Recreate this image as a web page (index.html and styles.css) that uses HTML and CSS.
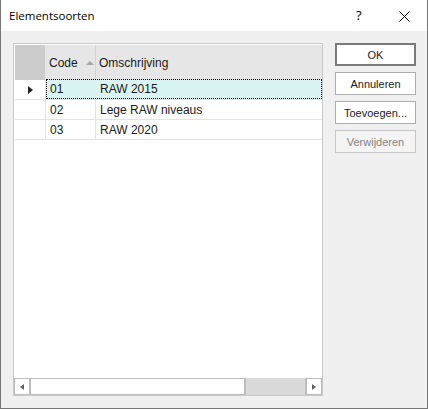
FILE: index.html
```html
<!DOCTYPE html>
<html>
<head>
<meta charset="utf-8">
<link rel="stylesheet" href="styles.css">
</head>
<body>
<div class="window">
  <div class="titlebar">
    <span class="title">Elementsoorten</span>
    <span class="help">?</span>
    <span class="close">
      <svg width="11" height="11" viewBox="0 0 11 11"><path d="M0.5 0.5 L10.5 10.5 M10.5 0.5 L0.5 10.5" stroke="#000" stroke-width="1" fill="none"/></svg>
    </span>
  </div>
  <div class="content">
    <div class="grid">
      <div class="table">
        <div class="row head">
          <div class="rh corner"></div>
          <div class="cell code hcell">Code<span class="sort"></span></div>
          <div class="cell desc hcell">Omschrijving</div>
        </div>
        <div class="row data current">
          <div class="rh"><span class="pointer"></span></div>
          <div class="focus">
            <div class="cell code">01</div>
            <div class="cell desc">RAW 2015</div>
          </div>
        </div>
        <div class="row data">
          <div class="rh"></div>
          <div class="cell code">02</div>
          <div class="cell desc">Lege RAW niveaus</div>
        </div>
        <div class="row data">
          <div class="rh"></div>
          <div class="cell code">03</div>
          <div class="cell desc">RAW 2020</div>
        </div>
      </div>
      <div class="hscroll">
        <div class="sbtn"><span class="arr-left"></span></div>
        <div class="thumb"></div>
        <div class="track"></div>
        <div class="sbtn"><span class="arr-right"></span></div>
      </div>
    </div>
    <div class="buttons">
      <div class="btn default">OK</div>
      <div class="btn">Annuleren</div>
      <div class="btn">Toevoegen...</div>
      <div class="btn disabled">Verwijderen</div>
    </div>
  </div>
</div>
</body>
</html>
```
FILE: styles.css
```css
* { box-sizing: border-box; }
html, body { margin: 0; padding: 0; }
body { width: 428px; height: 409px; overflow: hidden; background: #fff; }

.window {
  width: 428px;
  height: 409px;
  display: flex;
  flex-direction: column;
  border-left: 1px solid #767676;
  border-right: 1px solid #767676;
  border-bottom: 1px solid #767676;
  background: #f0f0f0;
}

.titlebar {
  height: 31px;
  flex: none;
  background: #fff;
  display: flex;
  align-items: center;
  font-family: "Open Sans", "Noto Sans", sans-serif;
  font-size: 11.5px;
  color: #000;
}
.title { margin-left: 8px; flex: 1; padding-bottom: 1px; }
.help { width: 10px; margin-right: 33px; font-size: 13px; padding-bottom: 1px; }
.close { width: 11px; height: 11px; margin-right: 17px; display: flex; margin-top: 1px; }

.content {
  flex: 1;
  display: flex;
  padding: 12px 0 0 12px;
  gap: 12px;
}

.grid {
  width: 310px;
  height: 353px;
  border: 1px solid #c9c9c9;
  background: #fff;
  display: flex;
  flex-direction: column;
}
.table {
  flex: 1;
  padding: 1px 0 0 1px;
  font-family: "Liberation Sans", Arial, sans-serif;
  font-size: 12px;
  color: #1a1a1a;
}
.row { display: flex; }
.row.head { height: 35px; background: #e6e6e6; }
.row.data { height: 20px; border-bottom: 1px solid #e3e3e3; }
.rh { width: 31px; flex: none; border-right: 1px solid #e3e3e3; display: flex; align-items: center; justify-content: center; }
.rh.corner { background: #cccccc; border-right: 1px solid #e6e6e6; }
.cell { display: flex; align-items: center; }
.code { width: 50px; flex: none; border-right: 1px solid #e3e3e3; padding-left: 4px; }
.desc { flex: 1; padding-left: 4px; }
.hcell { padding-left: 3px; }
.head .code { border-right: 1px solid #d4d4d4; }
.sort {
  width: 0; height: 0;
  border-left: 4px solid transparent;
  border-right: 4px solid transparent;
  border-bottom: 4px solid #a6a6a6;
  margin-left: 8px;
}
.current .focus {
  flex: 1;
  display: flex;
  background: #daf4f4;
  outline: 1px dotted #000;
  outline-offset: -1px;
  margin-top: -1px;
  height: 20px;
}
.current .focus .code { border-right: none; width: 50px; padding-left: 4px; }
.pointer {
  width: 0; height: 0;
  border-top: 4.5px solid transparent;
  border-bottom: 4.5px solid transparent;
  border-left: 5px solid #222;
  margin-left: 0;
}

.hscroll {
  height: 17px;
  display: flex;
  background: #dadada;
}
.sbtn {
  width: 17px;
  flex: none;
  background: #fff;
  border: 1px solid #bdbdbd;
  border-width: 1px 2px 1px 1px;
  display: flex;
  align-items: center;
  justify-content: center;
}
.sbtn:last-child { border-width: 1px 1px 1px 2px; }
.thumb {
  width: 215px;
  flex: none;
  background: #fff;
  border: 1px solid #bdbdbd;
  border-width: 1px 2px 1px 0;
}
.track { flex: 1; }
.arr-left {
  width: 0; height: 0;
  border-top: 3.5px solid transparent;
  border-bottom: 3.5px solid transparent;
  border-right: 4px solid #606060;
}
.arr-right {
  width: 0; height: 0;
  border-top: 3.5px solid transparent;
  border-bottom: 3.5px solid transparent;
  border-left: 4px solid #606060;
}

.buttons {
  width: 81px;
  display: flex;
  flex-direction: column;
  gap: 6px;
}
.btn {
  height: 23px;
  border: 1px solid #adadad;
  background: #fff;
  display: flex;
  align-items: center;
  justify-content: center;
  font-family: "Liberation Sans", Arial, sans-serif;
  font-size: 11px;
  color: #1a1a1a;
}
.btn.default { border: 2px solid #7a7a7a; }
.btn.disabled { color: #838383; border-color: #c6c6c6; background: #f4f4f4; }
```
